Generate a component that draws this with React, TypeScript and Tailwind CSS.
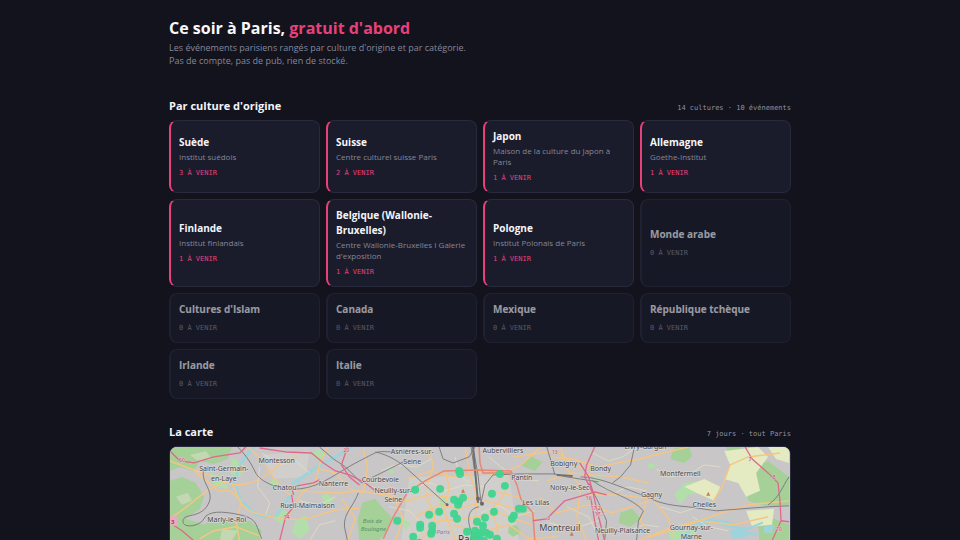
import React, { useState } from 'react';

interface Culture {
    name: string;
    place?: string;
    count: number;
}

const cultures: Culture[] = [
    { name: 'Suède', place: 'Institut suédois', count: 3 },
    { name: 'Suisse', place: 'Centre culturel suisse Paris', count: 2 },
    { name: 'Japon', place: 'Maison de la culture du Japon à Paris', count: 1 },
    { name: 'Allemagne', place: 'Goethe-Institut', count: 1 },
    { name: 'Finlande', place: 'Institut finlandais', count: 1 },
    { name: 'Belgique (Wallonie-Bruxelles)', place: "Centre Wallonie-Bruxelles I Galerie d'exposition", count: 1 },
    { name: 'Pologne', place: 'Institut Polonais de Paris', count: 1 },
    { name: 'Monde arabe', count: 0 },
    { name: "Cultures d'Islam", count: 0 },
    { name: 'Canada', count: 0 },
    { name: 'Mexique', count: 0 },
    { name: 'République tchèque', count: 0 },
    { name: 'Irlande', count: 0 },
    { name: 'Italie', count: 0 },
];

interface CultureCardProps {
    culture: Culture;
    selected: boolean;
    onClick: () => void;
}

const CultureCard: React.FC<CultureCardProps> = ({ culture, selected, onClick }) => {
    const empty = culture.count === 0;

    return (
        <button
            type="button"
            onClick={onClick}
            disabled={empty}
            aria-pressed={selected}
            className={`flex flex-col justify-center rounded-lg border border-l-2 border-[#282b3d] bg-[#1a1c2b] px-2 py-2 text-left ${empty ? 'opacity-60' : 'border-l-[#e8407a]'}`}
        >
            <span className="text-[10px] leading-[15px] font-bold text-[#f4f4fa]">{culture.name}</span>
            {culture.place && (
                <span className="mt-px text-[8px] leading-[11px] text-[#85879a]">{culture.place}</span>
            )}
            <span
                className={`mt-[5px] font-['DejaVu_Sans_Mono',monospace] text-[7px] leading-3 uppercase ${empty ? 'text-[#85879a]' : 'text-[#e8407a]'}`}
            >
                {culture.count} à venir
            </span>
        </button>
    );
};

interface SectionHeaderProps {
    title: string;
    info: string;
}

const SectionHeader: React.FC<SectionHeaderProps> = ({ title, info }) => (
    <div className="mb-[6px] flex items-baseline justify-between">
        <h2 className="text-[11px] leading-4 font-bold text-[#f4f4fa]">{title}</h2>
        <span className="font-['DejaVu_Sans_Mono',monospace] text-[7px] text-[#9092a4]">{info}</span>
    </div>
);

const forests = [
    'M0 0H62L58 12L44 17L30 14L24 24L10 20L0 24Z',
    'M0 34L12 30L26 36L34 50L30 62L16 72L34 78L48 70L62 76L80 74L92 84L86 110L70 140L0 150Z',
    'M193 56L206 52L214 62L222 70L218 84L208 96L190 94L188 74Z',
    'M351 18L362 9L374 15L366 24Z',
    'M505 2L520 -2L524 9L516 16L502 12Z',
    'M579 22L600 14L621 30V58L600 60L580 54Z',
    'M558 0H572L575 8L562 10Z',
    'M452 66L464 62L472 72L462 80L450 76Z',
    'M340 80L348 78L352 86L344 90L339 86Z',
    'M590 76L606 72L621 78V104H592Z',
    'M420 120L470 108L520 124L500 160L430 156Z',
];

const parks = [
    'M98 36L106 31L110 36L104 42Z',
    'M40 26L54 30L58 42L44 40Z',
    'M62 10L74 18L70 30L60 26Z',
    'M110 60L118 66L112 78L104 72Z',
    'M126 74L136 68L140 84L130 92L122 86Z',
    'M152 50L158 46L164 54L156 60Z',
    'M218 20L226 24L222 28Z',
    'M270 54L276 50L278 60L272 62Z',
    'M478 18L484 16L488 20L482 22Z',
    'M506 48L516 36L532 34L546 40L538 46L520 48L512 58Z',
    'M424 28L432 32L428 36Z',
    'M500 86L512 80L530 84L522 94H502Z',
    'M142 6L150 2L156 8L148 14Z',
    'M232 72L242 76L236 84Z',
];

const fields = [
    'M556 4L590 0L600 10L588 26L592 44L578 50L570 36L556 32L562 18Z',
    'M516 40L536 32L552 40L546 54L528 46Z',
    'M600 0H621V16L608 12Z',
    'M578 64L606 62L604 78L584 80Z',
];

const orangeRoads = [
    'M0 14C20 22 28 24 44 30S66 42 86 34S106 14 128 10',
    'M2 70C20 60 26 50 44 40S64 38 68 50S80 68 116 72S150 60 190 62',
    'M24 24L42 38L48 44L60 44L72 54L66 74L70 95',
    'M78 0L92 12L106 34L120 48L124 44L170 46L192 44L214 48L242 54',
    'M150 22L166 26L180 42L194 46',
    'M158 0L150 18L146 36L132 46L118 70',
    'M172 52L186 72L178 94',
    'M194 2L198 20L194 46',
    'M228 56L260 48L296 52L330 46L350 50',
    'M238 32L262 24L282 30L310 26L330 28L352 18L372 0',
    'M246 70L270 58L290 62L316 54L340 60L368 72',
    'M252 92L270 74L300 72L330 66L362 78',
    'M276 22L280 42L274 62L286 92',
    'M260 0L264 20L256 44L266 70L260 94',
    'M296 0L300 24L308 50L304 92',
    'M340 26L336 46L324 62L330 92',
    'M380 10L404 12L430 20L470 12L520 0',
    'M378 34L404 26L424 28L452 30L480 36',
    'M370 50L388 66L420 58L444 66L480 54',
    'M392 0L398 22L412 40L408 70L418 94',
    'M344 10L386 4L414 22',
    'M478 54L472 74L482 90L520 78L548 68L580 58L621 54',
    'M540 62L554 40L562 18L580 10L612 6',
    'M420 48L450 48L484 52L500 72L504 90',
    'M470 94L500 82L530 74L566 78L600 70',
    'M30 92L44 84L66 80L92 90',
    'M204 40L224 50L234 72L226 94',
    'M284 78L310 86L340 78L360 92L388 90',
];

const minorRoads = [
    'M92 6L110 18L126 14L140 26',
    'M90 20L88 40L100 56L96 68',
    'M130 54L150 58L166 50',
    'M140 94L150 78L166 74',
    'M212 24L226 18L248 20L262 12',
    'M220 60L240 64L254 78L246 92',
    'M244 40L262 36L276 44L296 38L316 40',
    'M286 10L290 28L300 36',
    'M312 66L330 58L346 70L366 64',
    'M320 10L332 20L350 32L370 34',
    'M424 6L440 14L454 10L468 0',
    'M432 40L446 46L460 40L478 44',
    'M488 22L500 30L520 28L536 18L552 20',
    'M492 60L512 66L530 60L548 64',
    'M398 60L420 70L430 90',
    'M524 70L540 80L560 84',
    'M380 76L404 82L430 74',
    'M460 84L476 78L490 80',
];

const rails = [
    'M68 0C78 10 82 18 86 26S108 44 130 42S170 24 190 14S206 4 222 5',
    'M34 23C30 36 46 44 38 58S14 66 13 74S30 80 34 72S52 64 70 68S86 78 92 92',
    'M206 5C220 8 232 16 238 22L278 58',
    'M150 0L164 12L176 20L192 36L216 24L236 14',
    'M189 46C184 60 174 66 175 80L178 94',
    'M270 0L274 12L284 16L300 10L306 0',
    'M302 0L306 26L309 52',
    'M304 0L309 28L312 56',
    'M312 56L316 38L324 28L350 27L386 27L398 30L430 35',
    'M412 30C430 30 452 40 468 46S490 58 520 60L548 64L600 60L621 59',
    'M378 0L384 20L386 28',
    'M424 34C444 48 462 50 475 64L470 74L468 94',
    'M466 0L462 18L452 30L444 36',
    'M600 58C612 50 614 40 621 30',
    'M310 60C298 62 298 74 302 84L304 94',
    'M420 36L430 56L438 74L436 94',
];

const motorways = [
    'M0 4L10 14L24 16L44 10L70 6L76 0',
    'M90 1L116 5L142 6L154 16L166 24L180 28L196 36L206 44',
    'M124 48L122 40L144 36L150 33',
    'M178 0L172 18L180 30L190 38',
    'M122 48L124 60L116 70L110 94',
    'M0 76L12 84L24 94',
    'M364 74L378 72L396 54L420 47L426 45L438 48',
    'M426 0L418 18L416 30L424 46',
    'M411 16L420 30L424 44L428 62L432 78L436 94',
    'M577 0L584 12L600 26L610 36L612 54L613 74L604 94',
    'M613 74L621 75',
    'M422 50L426 74L430 94',
];

const ringRoads = [
    'M214 92L224 70L238 46L256 34L275 24L310 23L342 24L348 38L352 52L364 66L366 94',
    'M310 -1L311 16L314 26L342 26',
];

const river = 'M84 0L71 16L64 36L71 53L86 68L106 70L118 53L124 36L143 23L173 6L190 -4';

interface MapLabel {
    text: string;
    x: number;
    y: number;
}

const townLabels: MapLabel[] = [
    { text: 'Montesson', x: 107, y: 16 },
    { text: 'Saint-Germain-', x: 54, y: 24 },
    { text: 'en-Laye', x: 54, y: 34 },
    { text: 'Chatou', x: 115, y: 43 },
    { text: 'Nanterre', x: 164, y: 39 },
    { text: 'Courbevoie', x: 211, y: 35 },
    { text: 'Neuilly-sur-', x: 224, y: 46 },
    { text: 'Seine', x: 224, y: 55 },
    { text: 'Rueil-Malmaison', x: 138, y: 61 },
    { text: 'Marly-le-Roi', x: 57, y: 75 },
    { text: 'Asnières-sur-', x: 243, y: 7 },
    { text: 'Seine', x: 243, y: 17 },
    { text: 'Aubervilliers', x: 334, y: 6 },
    { text: 'Pantin', x: 353, y: 33 },
    { text: 'Bobigny', x: 395, y: 19 },
    { text: 'Bondy', x: 432, y: 24 },
    { text: 'Noisy-le-Sec', x: 401, y: 43 },
    { text: 'Les Lilas', x: 367, y: 58 },
    { text: 'Livry-Gargan', x: 477, y: 2 },
    { text: 'Montfermeil', x: 512, y: 29 },
    { text: 'Gagny', x: 483, y: 50 },
    { text: 'Chelles', x: 536, y: 60 },
    { text: 'Neuilly-Plaisance', x: 454, y: 86 },
    { text: 'Gournay-sur-', x: 523, y: 83 },
    { text: 'Marne', x: 523, y: 92 },
];

const roadNumbers: MapLabel[] = [
    { text: '60', x: 12, y: 15 },
    { text: '20', x: 177, y: 5 },
    { text: '14', x: 117, y: 72 },
    { text: '13', x: 386, y: 7 },
    { text: '3', x: 380, y: 73 },
    { text: '16', x: 420, y: 53 },
    { text: '17.2', x: 427, y: 63 },
    { text: '17.1', x: 431, y: 69 },
    { text: '7', x: 582, y: 14 },
    { text: '8', x: 606, y: 32 },
    { text: '10', x: 611, y: 84 },
];

// One pin per venue
const venues = [
    [290, 24], [291, 27], [331, 27], [336, 39], [246, 43], [271, 42], [323, 47],
    [285, 53], [294, 51], [290, 55], [289, 58], [350, 62], [354, 62], [345, 69],
    [343, 72], [270, 65], [260, 68], [285, 67], [288, 72], [325, 65], [316, 71],
    [228, 74], [251, 78], [251, 81], [263, 79], [263, 84], [262, 87], [308, 75],
    [314, 79], [298, 85], [306, 84], [311, 86], [317, 86], [305, 90], [310, 91],
    [321, 88], [244, 90], [250, 96], [328, 92], [307, 94], [315, 94],
];

const EventMap = () => (
    <svg
        viewBox="0 0 622 200"
        preserveAspectRatio="xMidYMin slice"
        role="img"
        aria-label="Carte des événements"
        className="block w-full bg-[#c8c7c8] font-['Noto_Sans','Open_Sans',sans-serif]"
    >
        <g fill="#d1cfcc">
            <path d="M0 0H622V200H0Z" fill="#c8c6c7" />
            <path d="M92 8L140 4L136 30L104 32Z" />
            <path d="M240 30L340 28L350 94H232Z" />
        </g>
        <g fill="#a5d097">
            {forests.map((d) => <path key={d} d={d} />)}
        </g>
        <g fill="#b2deaa">
            {parks.map((d) => <path key={d} d={d} />)}
        </g>
        <g fill="#e4eac2">
            {fields.map((d) => <path key={d} d={d} />)}
        </g>
        <path d="M20 8L36 4L42 12L28 14ZM6 50L18 46L22 54L12 58ZM52 82L68 84L62 94H50Z" fill="#c3d8b2" />

        <g fill="none" stroke="#9fd3dc" strokeLinejoin="round" strokeLinecap="round">
            <path d={river} strokeWidth="3" />
            <path d="M120 50L130 34L150 20" strokeWidth="1" />
            <path d="M512 94L526 78L544 72L560 80L580 82L594 76" strokeWidth="2" />
            <path d="M544 74L562 76L572 84L588 88" strokeWidth="3" />
        </g>
        <path d="M526 74L536 72L540 78L530 80ZM560 84L574 82L580 90L566 92ZM596 80L606 78L604 86L596 86Z" fill="#9fd3dc" />

        <g fill="none" strokeLinejoin="round">
            <g stroke="#e6dfc0" strokeWidth="0.8">
                {minorRoads.map((d) => <path key={d} d={d} />)}
            </g>
            <g stroke="#f6c583" strokeWidth="1.4">
                {orangeRoads.map((d) => <path key={d} d={d} />)}
            </g>
            <g stroke="#77777a" strokeWidth="0.9">
                {rails.map((d) => <path key={d} d={d} />)}
            </g>
            <path d="M304 0L309 56M388 28L404 29" stroke="#707073" strokeWidth="2" />
            <g stroke="#e88774" strokeWidth="1.5">
                {ringRoads.map((d) => <path key={d} d={d} />)}
            </g>
            <g stroke="#e0688a" strokeWidth="1.3">
                {motorways.map((d) => <path key={d} d={d} />)}
            </g>
        </g>
        <g fill="#69696c">
            <circle cx="278" cy="58" r="1.5" />
            <circle cx="309" cy="52" r="2" />
            <circle cx="313" cy="57" r="2" />
        </g>
        <path d="M294 42L296 46H292ZM540 45L542 49H538ZM403 85L405 89H401Z" fill="#d07a4c" />
        <path d="M0 69H7V79H0Z" fill="#e5aebb" />
        <text x="1" y="77" fontSize="6" fontWeight="700" fill="#b4345a">3</text>

        <g fontSize="5" fill="#c73b61" stroke="#e0ccd1" strokeWidth="1" paintOrder="stroke" textAnchor="middle">
            {roadNumbers.map((label) => (
                <text key={`${label.text}-${label.x}`} x={label.x} y={label.y}>{label.text}</text>
            ))}
        </g>
        <g fontSize="6" fontStyle="italic" fill="#589265" textAnchor="middle">
            <text x="203" y="76">Bois de</text>
            <text x="204" y="84">Boulogne</text>
        </g>
        <text x="274" y="87" fontSize="6" fontStyle="italic" fill="#9777aa" textAnchor="middle">Paris</text>
        <g fontSize="7" fill="#46464a" stroke="#dad8d7" strokeWidth="1.4" strokeLinejoin="round" paintOrder="stroke" textAnchor="middle">
            {townLabels.map((label) => (
                <text key={`${label.text}-${label.x}`} x={label.x} y={label.y}>{label.text}</text>
            ))}
            <text x="391" y="84" fontSize="9">Montreuil</text>
        </g>
        <text x="289" y="96" fontSize="10" fill="#303034" stroke="#dad8d7" strokeWidth="1" paintOrder="stroke">Paris</text>

        <g fill="#3fd48f" fillOpacity="0.95">
            {venues.map(([x, y]) => <circle key={`${x}-${y}`} cx={x} cy={y} r="4" />)}
        </g>
    </svg>
);

const App = () => {
    const [selected, setSelected] = useState<string | null>(null);

    const total = cultures.reduce((sum, culture) => sum + culture.count, 0);

    const handleSelect = (name: string) => {
        setSelected(selected === name ? null : name);
    };

    return (
        <div className="min-h-screen bg-[#12131d] font-['Open_Sans','Noto_Sans',sans-serif]">
            <main className="mx-auto max-w-[622px] pt-4 pb-8">
                <header className="mb-[31px]">
                    <h1 className="text-[16px] leading-6 font-bold text-[#f8f8fc]">
                        Ce soir à Paris, <span className="text-[#e8407a]">gratuit d'abord</span>
                    </h1>
                    <p className="mt-px text-[9px] leading-[13px] text-[#85879a]">
                        Les événements parisiens rangés par culture d'origine et par catégorie.
                        <br />
                        Pas de compte, pas de pub, rien de stocké.
                    </p>
                </header>

                <section className="mb-[25px]">
                    <SectionHeader title="Par culture d'origine" info={`${cultures.length} cultures · ${total} événements`} />
                    <div className="grid grid-cols-4 gap-[6px]">
                        {cultures.map((culture) => (
                            <CultureCard
                                key={culture.name}
                                culture={culture}
                                selected={selected === culture.name}
                                onClick={() => handleSelect(culture.name)}
                            />
                        ))}
                    </div>
                </section>

                <section>
                    <SectionHeader title="La carte" info="7 jours · tout Paris" />
                    <div className="overflow-hidden rounded-lg border border-[#282b3d]">
                        <EventMap />
                    </div>
                </section>
            </main>
        </div>
    );
};

export default App;
